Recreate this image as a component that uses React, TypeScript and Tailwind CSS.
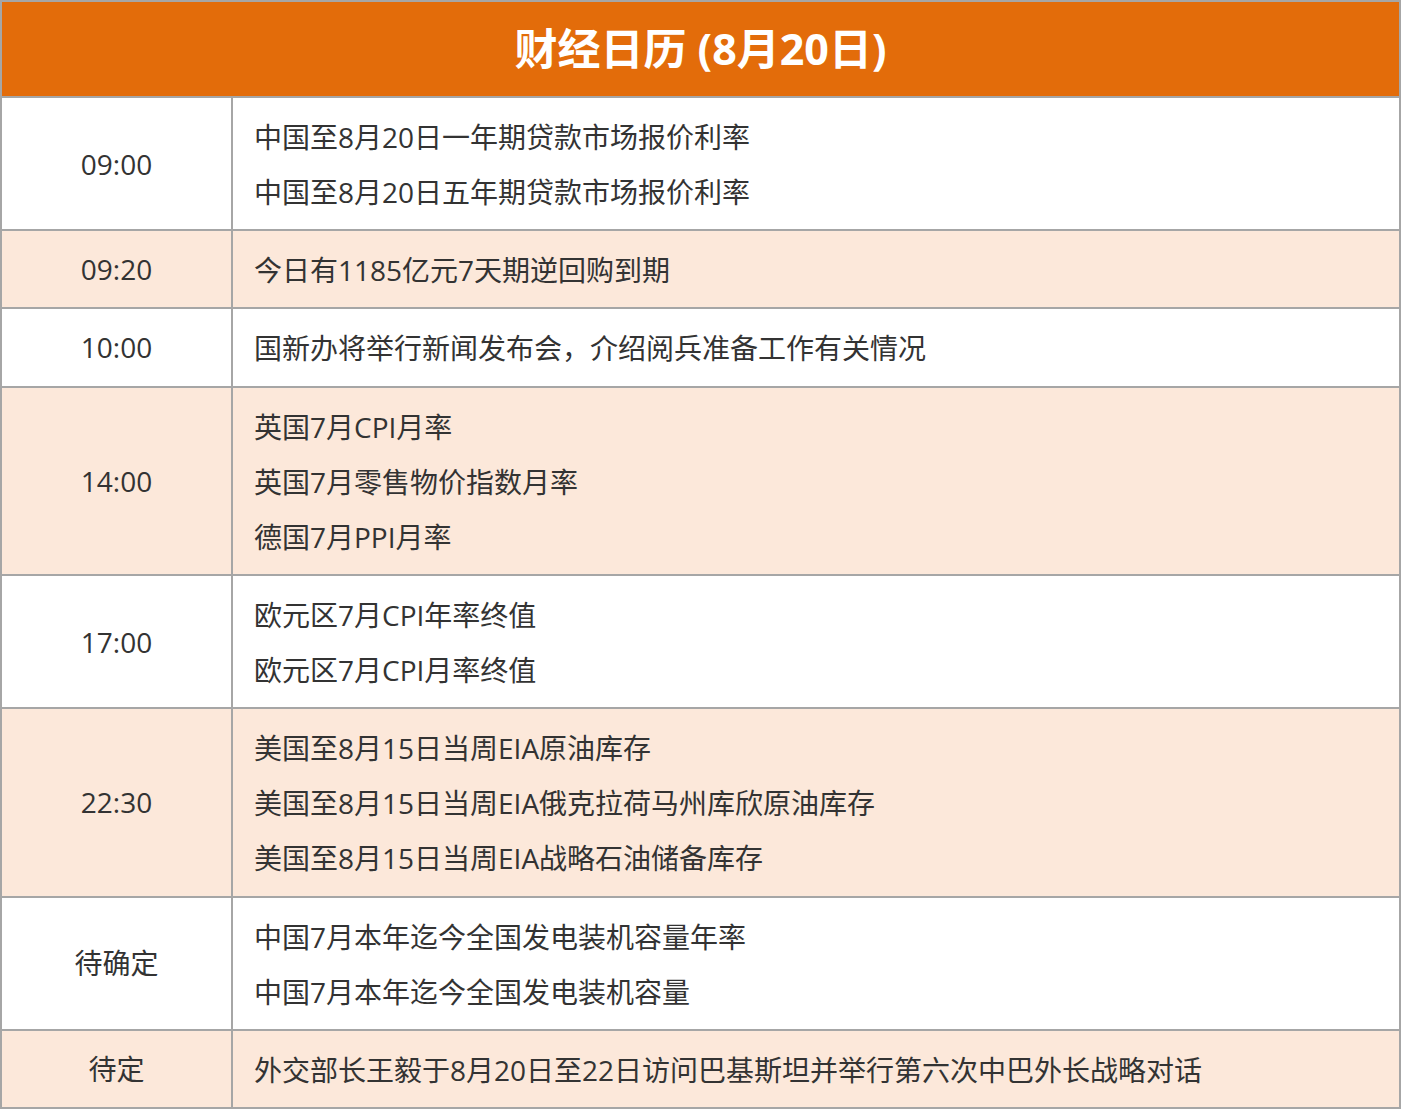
const rows: { time: string; items: string[] }[] = [
  { time: "09:00", items: ["中国至8月20日一年期贷款市场报价利率", "中国至8月20日五年期贷款市场报价利率"] },
  { time: "09:20", items: ["今日有1185亿元7天期逆回购到期"] },
  { time: "10:00", items: ["国新办将举行新闻发布会，介绍阅兵准备工作有关情况"] },
  { time: "14:00", items: ["英国7月CPI月率", "英国7月零售物价指数月率", "德国7月PPI月率"] },
  { time: "17:00", items: ["欧元区7月CPI年率终值", "欧元区7月CPI月率终值"] },
  {
    time: "22:30",
    items: ["美国至8月15日当周EIA原油库存", "美国至8月15日当周EIA俄克拉荷马州库欣原油库存", "美国至8月15日当周EIA战略石油储备库存"],
  },
  { time: "待确定", items: ["中国7月本年迄今全国发电装机容量年率", "中国7月本年迄今全国发电装机容量"] },
  { time: "待定", items: ["外交部长王毅于8月20日至22日访问巴基斯坦并举行第六次中巴外长战略对话"] },
];

export default function App() {
  return (
    <div
      className="w-[1402px] bg-white"
      style={{ fontFamily: '"Open Sans", "Noto Sans CJK SC", sans-serif' }}
    >
      <div className="w-[1401px] border-2 border-[#a6a6a6]">
        <div className="flex h-[94px] items-center justify-center bg-[#e36c0a]">
          <h1 className="text-[43px] font-bold text-white">财经日历 (8月20日)</h1>
        </div>
        {rows.map((row, i) => (
          <div
            key={row.time}
            className={`flex border-t-2 border-[#a6a6a6] ${i % 2 === 1 ? "bg-[#fce8da]" : "bg-white"}`}
          >
            <div className="flex w-[229px] shrink-0 items-center justify-center text-[28px] text-[#333333]">
              {row.time}
            </div>
            <div className="flex-1 border-l-2 border-[#a6a6a6] pl-[21px] pr-4 pt-[12px] pb-[9px]">
              {row.items.map((t) => (
                <div key={t} className="text-[28px] leading-[55.13px] text-[#333333]">
                  {t}
                </div>
              ))}
            </div>
          </div>
        ))}
      </div>
    </div>
  );
}
